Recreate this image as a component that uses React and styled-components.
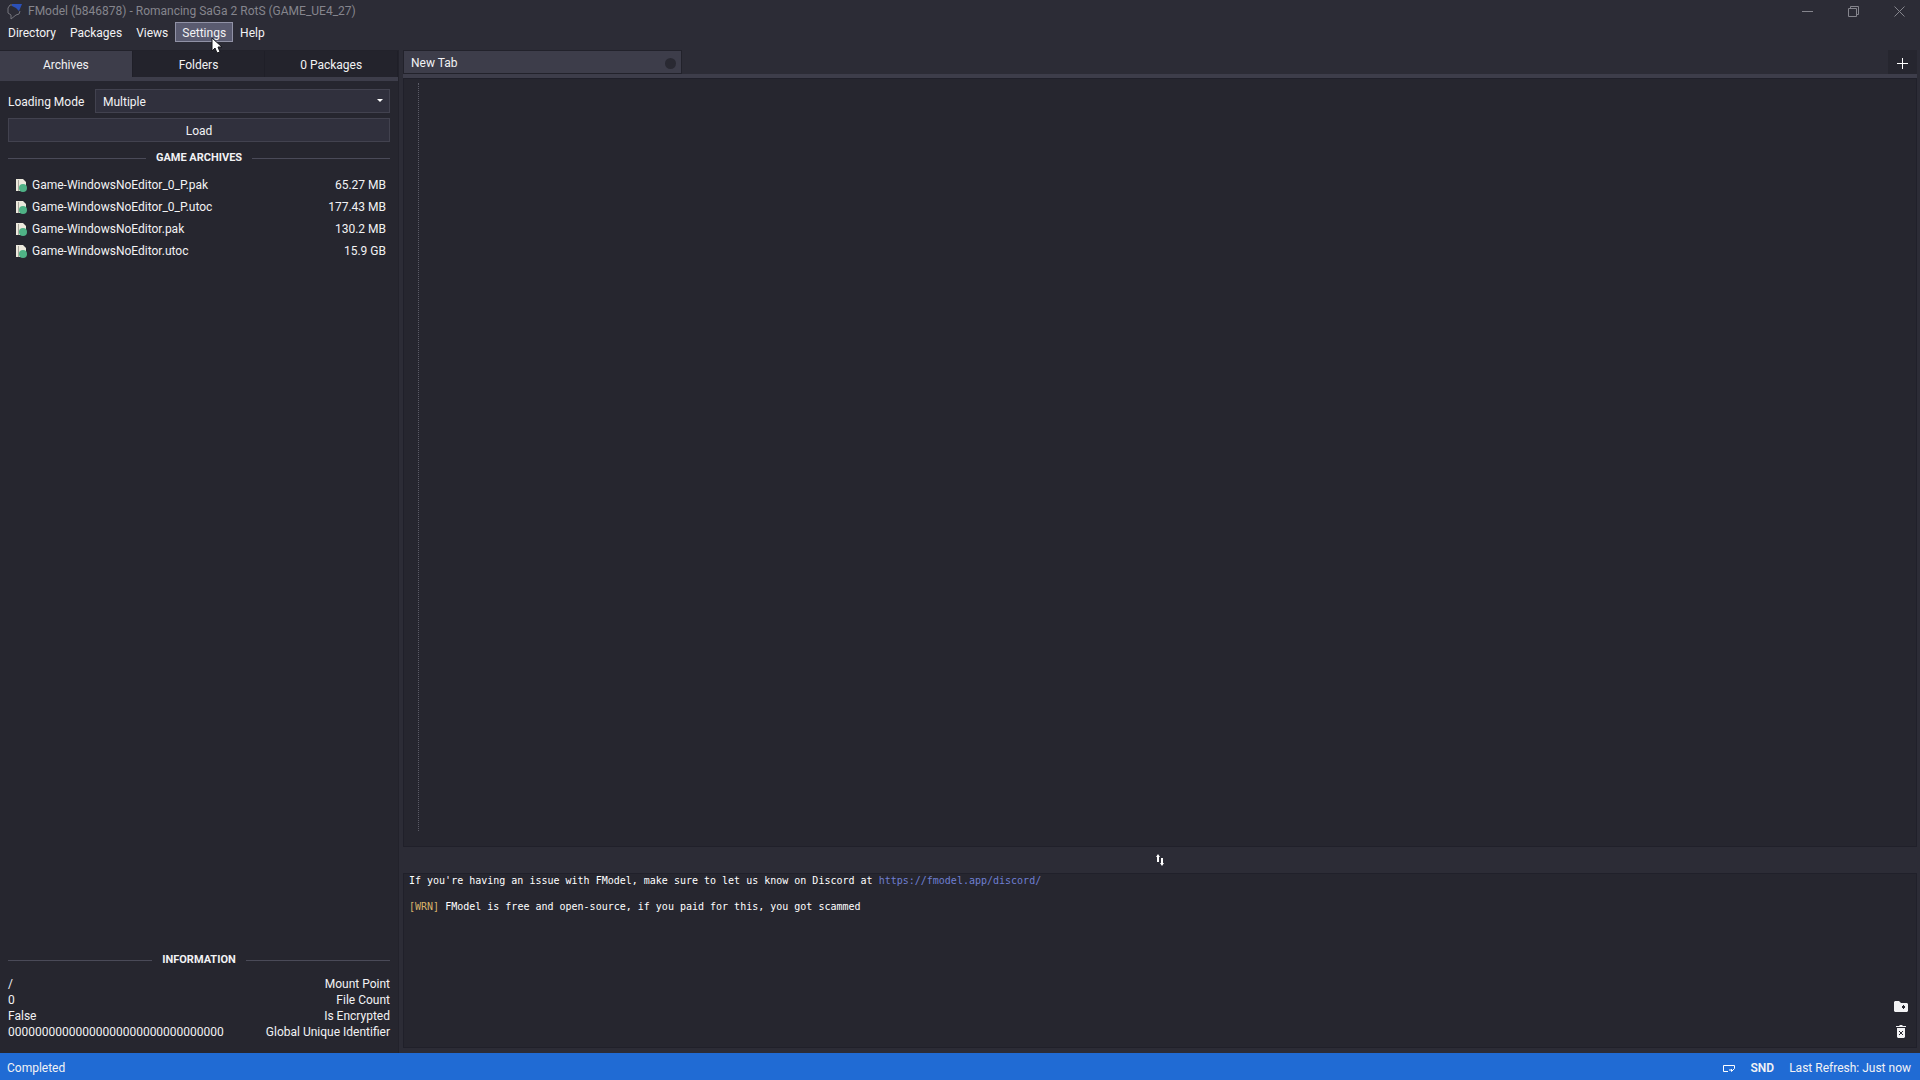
import React, { useState } from "react";
import styled, { createGlobalStyle } from "styled-components";

const GlobalStyle = createGlobalStyle`
  * {
    box-sizing: border-box;
  }
  body {
    margin: 0;
    background: #2c2c36;
    color: #f2f2f4;
    font-family: Roboto, "Noto Sans", sans-serif;
    font-size: 12px;
    line-height: 16px;
  }
  button, select {
    margin: 0;
    padding: 0;
    border: 0;
    background: none;
    color: inherit;
    font: inherit;
  }
`;

const Window = styled.div`
  display: flex;
  flex-direction: column;
  height: 100vh;
  overflow: hidden;
`;
const TitleBar = styled.header`
  display: flex;
  align-items: center;
  height: 22px;
  padding-left: 7px;
  color: #85858d;
`;
const Title = styled.div`
  flex: 1;
  margin-left: 5px;
`;
const WindowButton = styled.button`
  display: flex;
  align-items: center;
  justify-content: center;
  width: 46px;
  height: 22px;
  padding-left: 4px;
`;
const MenuBar = styled.nav`
  display: flex;
  height: 28px;
  padding-left: 1px;
`;
const MenuItem = styled.button`
  position: relative;
  height: 20px;
  padding: 2px 6px 0;
  border: 1px solid ${({ $active }) => ($active ? "#9192a6" : "transparent")};
  background: ${({ $active }) => ($active ? "#5a5b70" : "transparent")};
`;
const Cursor = styled.svg`
  position: absolute;
  left: 35px;
  top: 14px;
  z-index: 1;
`;

const Main = styled.main`
  display: flex;
  flex: 1;
  min-height: 0;
`;
const Sidebar = styled.aside`
  display: flex;
  flex-direction: column;
  flex: 0 0 399px;
  border-top: 1px solid #22222b;
  border-right: 1px solid #22222b;
  background: #26262f;
`;
const SidebarTabs = styled.div`
  display: flex;
  height: 30px;
  border-bottom: 4px solid #3d3d4a;
`;
const SidebarTab = styled.button`
  flex: 1;
  padding-top: 2px;
  border-right: 1px solid #1f1f28;
  background: ${({ $active }) => ($active ? "#3d3d4a" : "#23232c")};
`;
const SidebarBody = styled.div`
  display: flex;
  flex-direction: column;
  flex: 1;
  gap: 5px;
  padding: 8px;
`;
const ModeRow = styled.div`
  display: flex;
  align-items: center;
  justify-content: space-between;
  white-space: nowrap;
`;
const ModeLabel = styled.label`
  padding-top: 2px;
`;
const SelectBox = styled.div`
  position: relative;
  flex: 0 0 295px;
  height: 24px;
  border: 1px solid #42424f;
  background: #30303d;
`;
const Select = styled.select`
  width: 100%;
  height: 22px;
  padding: 2px 0 0 7px;
  appearance: none;
`;
const Caret = styled.svg`
  position: absolute;
  right: 6px;
  top: 9px;
  pointer-events: none;
`;
const LoadButton = styled.button`
  height: 24px;
  padding-top: 1px;
  border: 1px solid #42424f;
  background: #30303d;
`;
const SectionTitle = styled.h2`
  display: flex;
  align-items: center;
  gap: 10px;
  margin: 3px 0;
  font-size: 11px;
  font-weight: 700;
  &::before,
  &::after {
    content: "";
    flex: 1;
    height: 1px;
    background: #4a4a58;
  }
`;
const ArchiveList = styled.ul`
  flex: 1;
  margin: 0;
  padding: 0 4px 0 8px;
  list-style: none;
`;
const Archive = styled.li`
  display: flex;
  align-items: center;
  gap: 5px;
  height: 22px;
`;
const ArchiveName = styled.span`
  flex: 1;
`;
const InfoList = styled.dl`
  margin: 0 0 5px;
`;
const InfoRow = styled.div`
  display: flex;
  flex-direction: row-reverse;
  justify-content: space-between;
`;
const InfoValue = styled.dd`
  margin: 0;
`;

const Workspace = styled.section`
  display: flex;
  flex-direction: column;
  flex: 1;
  min-width: 0;
  margin: 0 3px 5px 4px;
`;
const DocumentTabs = styled.div`
  display: flex;
  justify-content: space-between;
  height: 28px;
  border-bottom: 4px solid #3d3d4a;
`;
const DocumentTab = styled.div`
  display: flex;
  align-items: center;
  justify-content: space-between;
  width: 279px;
  padding: 2px 5px 0 7px;
  border: 1px solid #22222b;
  background: #3d3d4a;
`;
const TabClose = styled.button`
  width: 11px;
  height: 11px;
  border-radius: 50%;
  background: #292932;
`;
const AddTab = styled.button`
  display: flex;
  align-items: center;
  justify-content: center;
  width: 29px;
  padding-top: 2px;
  background: #26262f;
`;
const Editor = styled.div`
  flex: 1;
  padding: 4px 14px 15px;
  border: 1px solid #20202a;
  background: #26262f;
`;
const EditorMargin = styled.div`
  height: 100%;
  border-left: 1px dotted #5b5b66;
`;
const Splitter = styled.div`
  display: flex;
  align-items: center;
  justify-content: center;
  height: 26px;
`;
const LogPanel = styled.div`
  display: flex;
  height: 175px;
  border: 1px solid #20202a;
  background: #26262f;
`;
const LogText = styled.div`
  flex: 1;
  padding-left: 5px;
  color: #fff;
  font-family: "DejaVu Sans Mono", monospace;
  font-size: 10px;
  line-height: 14px;
`;
const LogLine = styled.p`
  margin: 0 0 12px;
`;
const LogLink = styled.a`
  color: #6e7fd2;
  text-decoration: none;
`;
const Warn = styled.span`
  color: #d9b36a;
`;
const LogTools = styled.div`
  display: flex;
  flex-direction: column;
  justify-content: flex-end;
  gap: 8px;
  padding: 0 8px 8px 0;
`;
const ToolButton = styled.button`
  display: flex;
  height: 16px;
  align-items: center;
  justify-content: center;
`;

const StatusBar = styled.footer`
  display: flex;
  align-items: center;
  gap: 15px;
  height: 27px;
  padding: 3px 9px 0 7px;
  background: #206bd4;
`;
const Status = styled.div`
  flex: 1;
`;
const Audio = styled.span`
  font-weight: 600;
`;

const menu = ["Directory", "Packages", "Views", "Settings", "Help"];
const tabs = ["Archives", "Folders", "0 Packages"];
const archives = [
  { name: "Game-WindowsNoEditor_0_P.pak", size: "65.27 MB" },
  { name: "Game-WindowsNoEditor_0_P.utoc", size: "177.43 MB" },
  { name: "Game-WindowsNoEditor.pak", size: "130.2 MB" },
  { name: "Game-WindowsNoEditor.utoc", size: "15.9 GB" }
];
const info = [
  { label: "Mount Point", value: "/" },
  { label: "File Count", value: "0" },
  { label: "Is Encrypted", value: "False" },
  { label: "Global Unique Identifier", value: "0".repeat(32) }
];

const Logo = () => (
  <svg width="16" height="17" viewBox="0 0 16 17" fill="none">
    <path
      d="M7 2H3L1 5v5l3 2v4l5-4 3-1 1-3"
      stroke="#74747c"
      strokeWidth="1"
    />
    <path d="M5 1h10l-3 7-3-3-4-2z" fill="#2b50b8" />
  </svg>
);

const ArchiveIcon = () => (
  <svg width="11" height="13" viewBox="0 0 11 13">
    <path d="M0 0h7l3 3v9H0z" fill="#ece9dd" />
    <path d="M2 1h1v11H2z" fill="#a9a79d" />
    <circle cx="7" cy="9" r="4" fill="#4fb286" />
  </svg>
);

const App = () => {
  const [activeTab, setActiveTab] = useState("Archives");

  return (
    <Window>
      <GlobalStyle />
      <TitleBar>
        <Logo />
        <Title>FModel (b846878) - Romancing SaGa 2 RotS (GAME_UE4_27)</Title>
        <WindowButton aria-label="Minimize">
          <svg width="11" height="11" stroke="currentColor">
            <path d="M0 5.5h11" />
          </svg>
        </WindowButton>
        <WindowButton aria-label="Restore">
          <svg width="11" height="11" fill="none" stroke="currentColor">
            <path d="M.5 2.5h8v8h-8zM2.5 2V.5h8v8H9" />
          </svg>
        </WindowButton>
        <WindowButton aria-label="Close">
          <svg width="11" height="11" stroke="currentColor">
            <path d="m.5.5 10 10m0-10-10 10" />
          </svg>
        </WindowButton>
      </TitleBar>
      <MenuBar>
        {menu.map(item => (
          <MenuItem key={item} $active={item === "Settings"}>
            {item}
            {item === "Settings" && (
              <Cursor width="12" height="18" viewBox="0 0 12 18">
                <path
                  d="M1 1v13l3-3 2 5 3-1-2-5h4z"
                  fill="#fff"
                  stroke="#17171d"
                />
              </Cursor>
            )}
          </MenuItem>
        ))}
      </MenuBar>

      <Main>
        <Sidebar>
          <SidebarTabs>
            {tabs.map(tab => (
              <SidebarTab
                key={tab}
                $active={tab === activeTab}
                onClick={() => setActiveTab(tab)}
              >
                {tab}
              </SidebarTab>
            ))}
          </SidebarTabs>
          <SidebarBody>
            <ModeRow>
              <ModeLabel htmlFor="mode">Loading Mode</ModeLabel>
              <SelectBox>
                <Select id="mode" defaultValue="Multiple">
                  <option>Multiple</option>
                  <option>All</option>
                </Select>
                <Caret width="6" height="4" fill="#fff">
                  <path d="M0 0h6L3 3z" />
                </Caret>
              </SelectBox>
            </ModeRow>
            <LoadButton>Load</LoadButton>
            <SectionTitle>GAME ARCHIVES</SectionTitle>
            <ArchiveList>
              {archives.map(({ name, size }) => (
                <Archive key={name}>
                  <ArchiveIcon />
                  <ArchiveName>{name}</ArchiveName>
                  <span>{size}</span>
                </Archive>
              ))}
            </ArchiveList>
            <SectionTitle>INFORMATION</SectionTitle>
            <InfoList>
              {info.map(({ label, value }) => (
                <InfoRow key={label}>
                  <dt>{label}</dt>
                  <InfoValue>{value}</InfoValue>
                </InfoRow>
              ))}
            </InfoList>
          </SidebarBody>
        </Sidebar>

        <Workspace>
          <DocumentTabs>
            <DocumentTab>
              New Tab
              <TabClose aria-label="Close tab" />
            </DocumentTab>
            <AddTab aria-label="Add tab">
              <svg width="11" height="11" stroke="#fff">
                <path d="M5.5 0v11M0 5.5h11" />
              </svg>
            </AddTab>
          </DocumentTabs>
          <Editor>
            <EditorMargin />
          </Editor>
          <Splitter>
            <svg width="10" height="12" viewBox="0 0 10 12" fill="#fff">
              <path d="M3 0 1 3h1v5h2V3h1zM7 12l2-3H8V4H6v5H5z" />
            </svg>
          </Splitter>
          <LogPanel>
            <LogText>
              <LogLine>
                If you're having an issue with FModel, make sure to let us know
                on Discord at{" "}
                <LogLink href="https://fmodel.app/discord/">
                  https://fmodel.app/discord/
                </LogLink>
              </LogLine>
              <LogLine>
                <Warn>[WRN]</Warn> FModel is free and open-source, if you paid
                for this, you got scammed
              </LogLine>
            </LogText>
            <LogTools>
              <ToolButton aria-label="Open logs folder">
                <svg width="14" height="12" viewBox="0 0 14 12" fill="#f2f2f4">
                  <path d="M1 0h4l2 2h6l1 1v7l-1 1H1l-1-1V1z" />
                  <path d="M9 4h1v1h1v2h-1v1H9V7H8V5h1z" fill="#26262f" />
                </svg>
              </ToolButton>
              <ToolButton aria-label="Clear logs">
                <svg width="10" height="13" viewBox="0 0 10 13" fill="#f2f2f4">
                  <path d="M0 1h3l1-1h2l1 1h3v1H0zM1 3h8v9l-1 1H2l-1-1z" />
                  <path d="m3 6 4 4m0-4-4 4" stroke="#26262f" />
                </svg>
              </ToolButton>
            </LogTools>
          </LogPanel>
        </Workspace>
      </Main>

      <StatusBar>
        <Status>Completed</Status>
        <svg width="14" height="9" fill="none" stroke="#fff">
          <path d="M6 7.500H1.500V1.500h11v3l-3 3V5M8 5v2" />
        </svg>
        <Audio>SND</Audio>
        <span>Last Refresh: Just now</span>
      </StatusBar>
    </Window>
  );
};
export default App;
